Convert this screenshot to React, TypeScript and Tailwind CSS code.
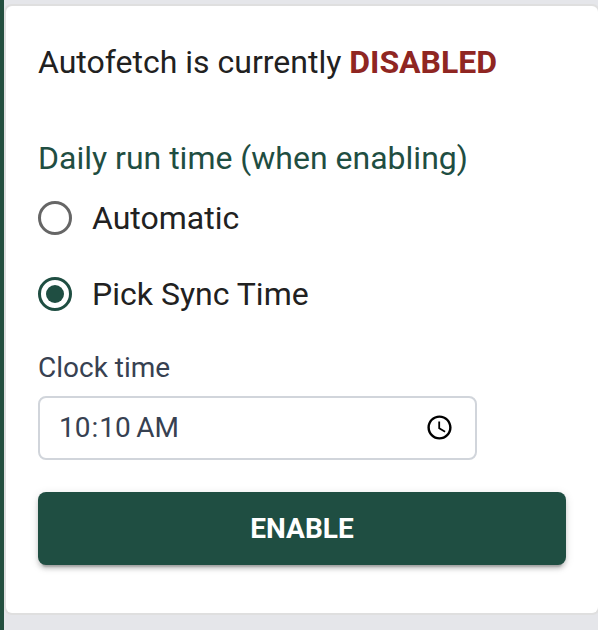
import { useState } from "react";

export default function App() {
  const [mode, setMode] = useState("pick");
  const [time, setTime] = useState("10:10");

  const radioClass =
    "size-[34px] shrink-0 appearance-none rounded-full border-3 border-[#666666] bg-white bg-clip-content p-[5px] checked:border-[#1f4e42] checked:bg-[#1f4e42]";

  return (
    <div className="min-h-screen border-l-4 border-[#234f3f] bg-[#e5e6ea] pt-1.5 pl-0.5 font-['Roboto',sans-serif] text-[#212121]">
      <section className="rounded-md bg-white px-8 pt-9 pb-12 shadow-[0_0_0_2px_#dfdfdf]">
        <h1 className="text-[32px] leading-10">
          Autofetch is currently <strong className="font-bold text-[#8f2622]">DISABLED</strong>
        </h1>

        <fieldset className="mt-14">
          <legend className="text-[32px] leading-10 text-[#1f4e42]">Daily run time (when enabling)</legend>
          <label className="mt-5 flex items-center gap-5 text-[32px] leading-10">
            <input
              type="radio"
              name="mode"
              checked={mode === "auto"}
              onChange={() => setMode("auto")}
              className={radioClass}
            />
            Automatic
          </label>
          <label className="mt-9 flex items-center gap-5 text-[32px] leading-10">
            <input
              type="radio"
              name="mode"
              checked={mode === "pick"}
              onChange={() => setMode("pick")}
              className={radioClass}
            />
            Pick Sync Time
          </label>
        </fieldset>

        <label htmlFor="clock-time" className="mt-[38px] block text-[28px] leading-8 text-[#374151]">
          Clock time
        </label>
        <input
          id="clock-time"
          type="time"
          value={time}
          onChange={(e) => setTime(e.target.value)}
          className="mt-3 block h-16 w-full max-w-[439px] rounded-lg border-2 border-[#d1d5db] bg-white px-[18px] text-[28px] leading-8 text-[#374151]"
        />

        <button className="mt-8 h-[73px] w-full rounded-lg bg-[#1f4e42] text-[28px] font-bold text-white shadow-[0_6px_2px_-4px_rgba(0,0,0,0.2),0_4px_4px_rgba(0,0,0,0.14),0_2px_10px_rgba(0,0,0,0.12)]">
          ENABLE
        </button>
      </section>
    </div>
  );
}
